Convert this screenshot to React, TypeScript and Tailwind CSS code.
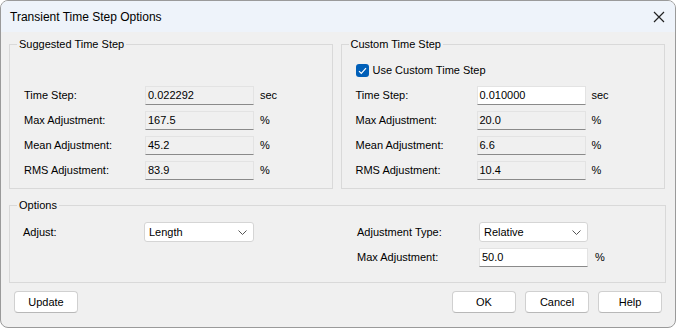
import React from 'react';

const font = { fontFamily: '"Liberation Sans", Arial, sans-serif' };

const Field: React.FC<{ value: string; editable?: boolean; w?: string }> = ({ value, editable, w = 'w-[109px]' }) => (
    <div
        className={`${w} h-[19px] flex items-center px-[2px] pb-[1px] text-[11px] text-black border border-[#e3e3e3] border-b-[#8a8a8a] ${
            editable ? 'bg-white' : 'bg-[#f0f0f0]'
        }`}
    >
        {value}
    </div>
);

const Select: React.FC<{ value: string; w?: string }> = ({ value, w = 'w-[110px]' }) => (
    <div className={`${w} h-[20px] flex items-center justify-between pl-[4px] pr-[6px] bg-white border border-[#d5d5d5] rounded-[3px] text-[11px]`}>
        <span>{value}</span>
        <svg width="9" height="5" viewBox="0 0 9 5" fill="none">
            <path d="M0.5 0.5l4 4 4-4" stroke="#555" strokeWidth="1" />
        </svg>
    </div>
);

const Row: React.FC<{ label: string; value: string; unit: string; editable?: boolean; labelW: string }> = ({
    label,
    value,
    unit,
    editable,
    labelW,
}) => (
    <div className="flex items-center h-[19px]">
        <span className={`${labelW} text-[11px]`}>{label}</span>
        <Field value={value} editable={editable} />
        <span className="ml-[6px] text-[11px]">{unit}</span>
    </div>
);

const Group: React.FC<{ title: string; className?: string; children: React.ReactNode }> = ({ title, className, children }) => (
    <div className={`relative border border-[#d9d9d9] ${className ?? ''}`}>
        <span className="absolute -top-[8px] left-[7px] px-[2px] bg-[#f0f0f0] text-[11px] leading-[14px]">{title}</span>
        {children}
    </div>
);

const Button: React.FC<{ label: string }> = ({ label }) => (
    <button className="w-[64px] h-[22px] bg-white border border-[#d0d0d0] border-b-[#b8b8b8] rounded-[4px] text-[11px] text-black">
        {label}
    </button>
);

export default function App() {
    return (
        <div style={font} className="w-[676px] h-[328px] bg-[#f0f0f0] text-black border border-[#9a9a9a] rounded-[8px] overflow-hidden flex flex-col">
            {/* title bar */}
            <div className="h-[31px] shrink-0 bg-[#eef3fa] flex items-center justify-between pl-[9px] pr-[9px]">
                <span className="text-[12px]">Transient Time Step Options</span>
                <svg width="12" height="12" viewBox="0 0 12 12" className="mr-[1px]">
                    <path d="M1 1l10 10M11 1L1 11" stroke="#222" strokeWidth="1.2" />
                </svg>
            </div>

            <div className="flex-1 flex flex-col pl-[8px] pr-[10px] pt-[12px]">
                <div className="flex gap-[8px]">
                    <Group title="Suggested Time Step" className="w-[324px] h-[145px]">
                        <div className="flex flex-col gap-[6px] pt-[16px] pl-[14px]">
                            <div className="h-[19px]" />
                            <Row labelW="w-[121px]" label="Time Step:" value="0.022292" unit="sec" />
                            <Row labelW="w-[121px]" label="Max Adjustment:" value="167.5" unit="%" />
                            <Row labelW="w-[121px]" label="Mean Adjustment:" value="45.2" unit="%" />
                            <Row labelW="w-[121px]" label="RMS Adjustment:" value="83.9" unit="%" />
                        </div>
                    </Group>
                    <Group title="Custom Time Step" className="w-[325px] h-[145px]">
                        <div className="flex flex-col gap-[6px] pt-[16px] pl-[14px]">
                            <div className="h-[19px] flex items-center gap-[4px]">
                                <span className="w-[13px] h-[13px] rounded-[3px] bg-[#005fb8] flex items-center justify-center">
                                    <svg width="9" height="8" viewBox="0 0 9 8" fill="none">
                                        <path d="M1 4.2l2.3 2.3L8 1.2" stroke="white" strokeWidth="1.2" />
                                    </svg>
                                </span>
                                <span className="text-[11px]">Use Custom Time Step</span>
                            </div>
                            <Row labelW="w-[121px]" label="Time Step:" value="0.010000" unit="sec" editable />
                            <Row labelW="w-[121px]" label="Max Adjustment:" value="20.0" unit="%" />
                            <Row labelW="w-[121px]" label="Mean Adjustment:" value="6.6" unit="%" />
                            <Row labelW="w-[121px]" label="RMS Adjustment:" value="10.4" unit="%" />
                        </div>
                    </Group>
                </div>

                <Group title="Options" className="mt-[16px] w-[657px] h-[78px]">
                    <div className="flex pt-[16px] pl-[13px]">
                        <div className="w-[334px] flex items-center h-[20px]">
                            <span className="w-[121px] text-[11px]">Adjust:</span>
                            <Select value="Length" />
                        </div>
                        <div className="flex flex-col gap-[6px]">
                            <div className="flex items-center h-[20px]">
                                <span className="w-[122px] text-[11px]">Adjustment Type:</span>
                                <Select value="Relative" w="w-[109px]" />
                            </div>
                            <div className="flex items-center h-[19px]">
                                <span className="w-[122px] text-[11px]">Max Adjustment:</span>
                                <Field value="50.0" editable />
                                <span className="ml-[7px] text-[11px]">%</span>
                            </div>
                        </div>
                    </div>
                </Group>

                <div className="flex justify-between mt-[8px] pl-[5px] pr-[3px]">
                    <Button label="Update" />
                    <div className="flex gap-[9px]">
                        <Button label="OK" />
                        <Button label="Cancel" />
                        <Button label="Help" />
                    </div>
                </div>
            </div>
        </div>
    );
}
